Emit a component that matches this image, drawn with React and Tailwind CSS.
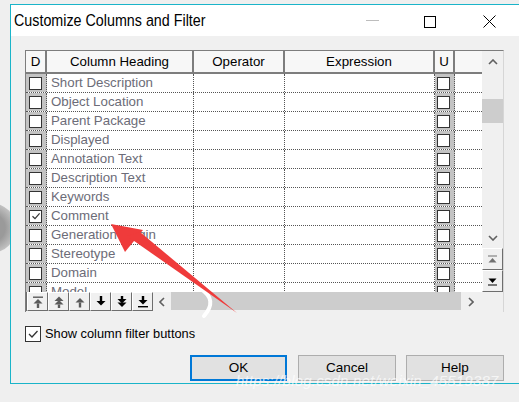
import React from "react";

const rows = [
  "Short Description",
  "Object Location",
  "Parent Package",
  "Displayed",
  "Annotation Text",
  "Description Text",
  "Keywords",
  "Comment",
  "Generation Origin",
  "Stereotype",
  "Domain",
  "Model",
];

function Check({ checked, size = 13 }) {
  return (
    <div
      className="bg-white border border-[#333] flex items-center justify-center"
      style={{ width: size, height: size }}
    >
      {checked && (
        <svg width={size - 3} height={size - 3} viewBox="0 0 10 10">
          <path d="M1.5 5.2 L4 7.6 L8.6 2.4" fill="none" stroke="#333" strokeWidth="1.2" />
        </svg>
      )}
    </div>
  );
}

function Arrow({ dir, double, bar, color }) {
  const up = dir === "up";
  const paths = [];
  const tri = (y) => (up ? `M6 ${y} L1.5 ${y + 4.5} L10.5 ${y + 4.5} Z` : `M6 ${y + 4.5} L1.5 ${y} L10.5 ${y} Z`);
  if (up) {
    if (bar) paths.push(<rect key="b" x="1" y="0.5" width="10" height="1.4" fill={color} />);
    if (double) {
      paths.push(<path key="t1" d={tri(0.5)} fill={color} />);
      paths.push(<path key="t2" d={tri(4)} fill={color} />);
      paths.push(<rect key="s" x="4.8" y="8.5" width="2.4" height="3.5" fill={color} />);
    } else {
      paths.push(<path key="t" d={tri(bar ? 3 : 2)} fill={color} />);
      paths.push(<rect key="s" x="4.8" y={bar ? 7.5 : 6.5} width="2.4" height={bar ? 4.5 : 5} fill={color} />);
    }
  } else {
    if (double) {
      paths.push(<rect key="s" x="4.8" y="0" width="2.4" height="3.5" fill={color} />);
      paths.push(<path key="t1" d={tri(3)} fill={color} />);
      paths.push(<path key="t2" d={tri(6.5)} fill={color} />);
    } else {
      paths.push(<rect key="s" x="4.8" y="0" width="2.4" height={bar ? 4.5 : 5.5} fill={color} />);
      paths.push(<path key="t" d={tri(bar ? 4 : 5)} fill={color} />);
    }
    if (bar) paths.push(<rect key="b" x="1" y="10" width="10" height="1.4" fill={color} />);
  }
  return (
    <svg width="12" height="12" viewBox="0 0 12 12">
      {paths}
    </svg>
  );
}

function ToolBtn({ children }) {
  return (
    <div className="w-[21px] h-[19px] flex items-center justify-center bg-[#f0f0f0] border-t border-l border-t-white border-l-white border-r border-b border-r-[#6e6e6e] border-b-[#6e6e6e]">
      {children}
    </div>
  );
}

export default function App() {
  const sans = { fontFamily: '"Liberation Sans", Arial, sans-serif' };
  return (
    <div className="relative w-[519px] h-[402px] overflow-hidden bg-[#efefef]">
      {/* background gray circles */}
      <div className="absolute left-[-34px] top-[203px] w-[50px] h-[50px] rounded-full bg-[radial-gradient(circle,#9a9a9a_40%,#c8c8c8_75%,#e6e6e6_100%)]" />
      <div className="absolute left-[506px] top-[203px] w-[50px] h-[50px] rounded-full bg-[radial-gradient(circle,#9a9a9a_40%,#c8c8c8_75%,#e6e6e6_100%)]" />

      <div className="relative ml-[10px] mt-[4px] w-[520px] h-[380px] border border-[#1ab4c9] bg-[#f0f0f0] flex flex-col">
        {/* title bar */}
        <div className="h-[31px] bg-white flex items-center shrink-0">
          <div className="pl-[3px] text-[14.3px] text-black leading-none scale-y-[1.12] origin-left" style={sans}>
            Customize Columns and Filter
          </div>
        </div>
        <div className="absolute left-[355px] top-[15px] w-[13px] h-px bg-[#bdbdbd]" />
        <div className="absolute left-[413px] top-[11px] w-[12px] h-[12px] border border-black" />
        <svg className="absolute left-[472px] top-[10px]" width="13" height="13" viewBox="0 0 13 13">
          <path d="M0.5 0.5 L12.5 12.5 M12.5 0.5 L0.5 12.5" stroke="#000" strokeWidth="1" />
        </svg>

        {/* content */}
        <div className="pl-[14px] pt-[14px] flex flex-col">
          {/* panel */}
          <div className="w-[479px] h-[262px] border-l border-t border-[#7d7d7d] border-r border-r-[#d6d6d6] bg-[#f0f0f0] flex flex-col">
            <div className="flex h-[241px]">
              {/* table */}
              <div className="w-[456px] h-[241px] overflow-hidden bg-white flex flex-col" style={sans}>
                <div className="flex h-[23px] shrink-0 bg-[#f7f7f7] text-[13.3px] text-black border-b-2 border-[#7d7d7d]">
                  <div className="w-[21px] border-r-2 border-[#7d7d7d] flex items-center justify-center">D</div>
                  <div className="w-[147px] border-r-2 border-[#7d7d7d] flex items-center justify-center">Column Heading</div>
                  <div className="w-[91px] border-r-2 border-[#7d7d7d] flex items-center justify-center">Operator</div>
                  <div className="w-[150px] border-r-2 border-[#7d7d7d] flex items-center justify-center">Expression</div>
                  <div className="w-[20px] border-r-2 border-[#7d7d7d] flex items-center justify-center">U</div>
                  <div className="flex-1" />
                </div>
                {rows.map((r) => (
                  <div key={r} className="flex h-[19px] shrink-0 border-b border-dotted border-[#555] text-[13.3px] text-[#6c6c78]">
                    <div className="w-[21px] bg-[#c3c3c3] border-r border-dotted border-[#555] flex items-center pl-[3px]">
                      <Check checked={r === "Comment"} />
                    </div>
                    <div className="w-[147px] border-r border-dotted border-[#555] flex items-center pl-[4px] leading-none whitespace-nowrap">
                      {r}
                    </div>
                    <div className="w-[91px] border-r border-dotted border-[#555]" />
                    <div className="w-[150px] border-r border-dotted border-[#555]" />
                    <div className="w-[20px] bg-[#c3c3c3] border-r border-dotted border-[#555] flex items-center pl-[2px]">
                      <Check />
                    </div>
                    <div className="flex-1" />
                  </div>
                ))}
              </div>
              {/* vertical scrollbar */}
              <div className="w-[21px] h-[241px] bg-[#f0f0f0] flex flex-col">
                <div className="h-[22px] flex items-center justify-center">
                  <svg width="10" height="6" viewBox="0 0 10 6">
                    <path d="M1 5 L5 1 L9 5" fill="none" stroke="#606060" strokeWidth="1.6" />
                  </svg>
                </div>
                <div className="h-[26px]" />
                <div className="h-[24px] bg-[#cdcdcd]" />
                <div className="flex-1" />
                <div className="h-[21px] flex items-center justify-center">
                  <svg width="10" height="6" viewBox="0 0 10 6">
                    <path d="M1 1 L5 5 L9 1" fill="none" stroke="#606060" strokeWidth="1.6" />
                  </svg>
                </div>
                <div className="h-[22px] w-[21px] border-t border-l border-white border-r border-b border-r-[#6e6e6e] border-b-[#6e6e6e] flex items-center justify-center">
                  <svg width="11" height="9" viewBox="0 0 11 9">
                    <rect x="1" y="0.5" width="9" height="1" fill="#707070" />
                    <path d="M5.5 3 L1.5 7.5 L9.5 7.5 Z" fill="#707070" />
                  </svg>
                </div>
                <div className="h-[22px] w-[21px] border-t border-l border-white border-r border-b border-r-[#6e6e6e] border-b-[#6e6e6e] flex items-center justify-center">
                  <svg width="11" height="9" viewBox="0 0 11 9">
                    <path d="M5.5 6 L1.5 1.5 L9.5 1.5 Z" fill="#000" />
                    <rect x="1" y="7.5" width="9" height="1" fill="#000" />
                  </svg>
                </div>
              </div>
            </div>
            {/* bottom bar */}
            <div className="flex h-[20px]">
              <div className="flex border-l border-[#6e6e6e] h-[19px]">
                <ToolBtn><Arrow dir="up" bar color="#5a5a5a" /></ToolBtn>
                <ToolBtn><Arrow dir="up" double color="#5a5a5a" /></ToolBtn>
                <ToolBtn><Arrow dir="up" color="#5a5a5a" /></ToolBtn>
                <ToolBtn><Arrow dir="down" color="#000" /></ToolBtn>
                <ToolBtn><Arrow dir="down" double color="#000" /></ToolBtn>
                <ToolBtn><Arrow dir="down" bar color="#000" /></ToolBtn>
              </div>
              <div className="w-[18px] flex items-center justify-center">
                <svg width="6" height="10" viewBox="0 0 6 10">
                  <path d="M5 1 L1 5 L5 9" fill="none" stroke="#606060" strokeWidth="1.6" />
                </svg>
              </div>
              <div className="w-[290px] h-[18px] bg-[#cdcdcd]" />
              <div className="w-[20px] flex items-center justify-center">
                <svg width="6" height="10" viewBox="0 0 6 10">
                  <path d="M1 1 L5 5 L1 9" fill="none" stroke="#606060" strokeWidth="1.6" />
                </svg>
              </div>
            </div>
          </div>

          {/* show filter checkbox */}
          <div className="mt-[14px] flex items-center h-[16px]">
            <div className="w-[16px] h-[16px] border border-[#333] bg-white flex items-center justify-center">
              <svg width="12" height="12" viewBox="0 0 12 12">
                <path d="M2 6 L5 9 L10.5 3" fill="none" stroke="#333" strokeWidth="1.3" />
              </svg>
            </div>
            <div className="ml-[4px] text-[12.8px] text-black leading-none" style={sans}>
              Show column filter buttons
            </div>
          </div>

          {/* buttons */}
          <div className="mt-[13px] flex w-[479px] justify-end gap-[10px] text-[13.5px] text-black" style={sans}>
            <div className="w-[97px] h-[26px] border-2 border-[#0078d7] bg-[#e1e1e1] flex items-center justify-center">OK</div>
            <div className="ml-[1px] w-[98px] h-[26px] border border-[#adadad] bg-[#e1e1e1] flex items-center justify-center">Cancel</div>
            <div className="w-[98px] h-[26px] border border-[#adadad] bg-[#e1e1e1] flex items-center justify-center">Help</div>
          </div>
        </div>
      </div>

      {/* watermark */}
      <div
        className="absolute left-[236px] top-[370px] text-[15px] italic text-white/70 whitespace-nowrap tracking-[0.2px]"
        style={sans}
      >
        https://blog.csdn.net/weixin_45519387
      </div>

      {/* annotation arrow */}
      <svg className="absolute left-0 top-0 pointer-events-none" width="519" height="402">
        <path d="M201 289 Q 218 300 204 316" fill="none" stroke="#fff" strokeWidth="4" strokeLinecap="round" />
        <path d="M111 224 L143 230 L125 252 Z" fill="#ef3b3b" />
        <path d="M237 313 L127 236 L140 232 Z" fill="#ef3b3b" />
      </svg>
    </div>
  );
}
